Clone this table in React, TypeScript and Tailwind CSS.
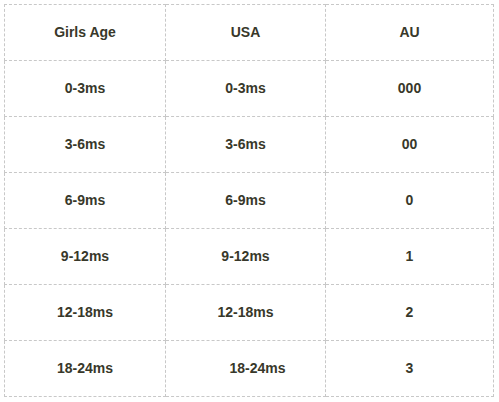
import React from 'react';

const rows: [string, string, string][] = [
  ['0-3ms', '0-3ms', '000'],
  ['3-6ms', '3-6ms', '00'],
  ['6-9ms', '6-9ms', '0'],
  ['9-12ms', '9-12ms', '1'],
  ['12-18ms', '12-18ms', '2'],
  ['18-24ms', '18-24ms', '3'],
];

const cell = 'border border-dashed border-[#c8c8c8] h-[56px] p-0 text-center align-middle';

const App: React.FC = () => {
  return (
    <div className="w-[499px] h-[402px] bg-white pt-[4px] pl-[4px] font-['Liberation_Sans',Arial,sans-serif] text-[14px] font-bold text-[#38382a]">
      <table className="border-collapse table-fixed w-[489px]">
        <colgroup>
          <col className="w-[161px]" />
          <col className="w-[160px]" />
          <col className="w-[168px]" />
        </colgroup>
        <thead>
          <tr>
            <th className={cell}>Girls Age</th>
            <th className={cell}>USA</th>
            <th className={cell}>AU</th>
          </tr>
        </thead>
        <tbody>
          {rows.map(([age, usa, au], i) => (
            <tr key={age}>
              <td className={cell}>{age}</td>
              <td className={cell}>
                {/* last row sits a little right in the original */}
                <span className={i === rows.length - 1 ? 'pl-[24px]' : ''}>{usa}</span>
              </td>
              <td className={cell}>{au}</td>
            </tr>
          ))}
        </tbody>
      </table>
    </div>
  );
};

export default App;
